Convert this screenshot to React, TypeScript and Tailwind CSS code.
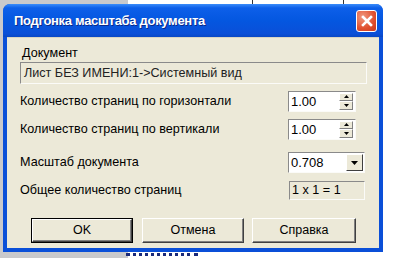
const font = { fontFamily: '"Liberation Sans", Arial, sans-serif' };

function Sunken({ className = "", children }: { className?: string; children?: React.ReactNode }) {
  return (
    <div
      className={`border border-t-[#8a8a8a] border-l-[#8a8a8a] border-r-[#fbfbf8] border-b-[#fbfbf8] ${className}`}
    >
      {children}
    </div>
  );
}

function Tri({ up }: { up?: boolean }) {
  return (
    <svg width="5" height="3" viewBox="0 0 5 3">
      <path d={up ? "M2.5 0 L5 3 L0 3 Z" : "M0 0 L5 0 L2.5 3 Z"} fill="#000" />
    </svg>
  );
}

function Spin({ value }: { value: string }) {
  return (
    <Sunken className="w-[68px] h-[21px] bg-white flex items-center pl-[2px] pr-[2px]">
      <span className="flex-1 text-[13px] leading-none">{value}</span>
      <div className="w-[14px] h-[17px] flex flex-col">
        <div className="flex-1 bg-[#ece9d8] border border-t-white border-l-white border-r-[#808080] border-b-[#808080] flex items-center justify-center">
          <Tri up />
        </div>
        <div className="flex-1 bg-[#ece9d8] border border-t-white border-l-white border-r-[#808080] border-b-[#808080] flex items-center justify-center">
          <Tri />
        </div>
      </div>
    </Sunken>
  );
}

function Btn({ label, def, w }: { label: string; def?: boolean; w: string }) {
  return (
    <div className={`${w} h-[25px] ${def ? "border border-black" : ""}`}>
      <div className="h-full w-full bg-[#ece9d8] border border-t-white border-l-white border-r-[#404040] border-b-[#404040] shadow-[inset_-1px_-1px_0_#808080] flex items-center justify-center text-[12.5px]">
        {label}
      </div>
    </div>
  );
}

export default function App() {
  return (
    <div className="w-[394px] h-[258px] bg-white relative overflow-hidden" style={font}>
      {/* backdrop */}
      <div className="absolute left-0 top-0 w-[128px] h-full bg-[#c9c9cc]" />
      <div className="absolute left-[252px] top-0 w-[1px] h-[4px] bg-[#333]" />
      <div className="absolute left-[343px] top-0 w-[1px] h-[4px] bg-[#333]" />
      <div className="absolute left-[126px] top-[253px] w-[72px] h-[4px] border-t-[3px] border-dotted border-[#1a2a7a]" />

      {/* dialog */}
      <div className="relative ml-[3px] mt-[4px] w-[380px] h-[248px] flex flex-col rounded-t-[7px] overflow-hidden bg-[#0a4fd8]">
        <div className="h-[33px] shrink-0 flex items-center pl-[11px] pr-[6px] bg-[linear-gradient(#3a8cfa_0%,#0d5fe9_12%,#0457e0_50%,#0a4fd8_90%,#0847c4_100%)]">
          <span className="flex-1 text-white font-bold text-[13px] tracking-[-0.3px] [text-shadow:1px_1px_0_#0a2a8a]">
            Подгонка масштаба документа
          </span>
          <div className="w-[21px] h-[22px] rounded-[3px] border border-white bg-[radial-gradient(circle_at_30%_30%,#f09a80,#e0502f_60%,#c8391c)] flex items-center justify-center">
            <svg width="12" height="12" viewBox="0 0 12 12">
              <path d="M2 2 L10 10 M10 2 L2 10" stroke="#fff" strokeWidth="2.6" strokeLinecap="square" />
            </svg>
          </div>
        </div>
        <div className="flex-1 mx-[4px] mb-[4px] bg-[#ece9d8] border-t border-[#d8d4c4] flex flex-col pl-[13px] pr-[10px] text-[12.6px] text-black">
          <div className="mt-[8px] ml-[2px] leading-[14px]">Документ</div>
          <Sunken className="mt-[2px] w-[347px] h-[22px] flex items-center pl-[3px] text-[12.6px] text-[#222]">
            Лист БЕЗ ИМЕНИ:1-&gt;Системный вид
          </Sunken>
          <div className="mt-[6px] flex items-center h-[22px]">
            <span className="w-[268px]">Количество страниц по горизонтали</span>
            <Spin value="1.00" />
          </div>
          <div className="mt-[6px] flex items-center h-[22px]">
            <span className="w-[268px]">Количество страниц по вертикали</span>
            <Spin value="1.00" />
          </div>
          <div className="mt-[12px] flex items-center h-[21px]">
            <span className="w-[268px]">Масштаб документа</span>
            <Sunken className="w-[77px] h-[21px] bg-white flex items-center pl-[2px] pr-[1px]">
              <span className="flex-1 text-[13px] leading-none">0.708</span>
              <div className="w-[17px] h-[17px] bg-[#ece9d8] border border-t-white border-l-white border-r-[#404040] border-b-[#404040] flex items-center justify-center">
                <svg width="7" height="4" viewBox="0 0 7 4">
                  <path d="M0 0 L7 0 L3.5 4 Z" fill="#000" />
                </svg>
              </div>
            </Sunken>
          </div>
          <div className="mt-[8px] flex items-center h-[19px]">
            <span className="w-[269px]">Общее количество страниц</span>
            <Sunken className="w-[76px] h-[19px] flex items-center pl-[2px] text-[12.6px]">1 x 1 = 1</Sunken>
          </div>
          <div className="mt-[18px] ml-[11px] flex gap-[9px]">
            <Btn label="OK" def w="w-[102px]" />
            <Btn label="Отмена" w="w-[102px]" />
            <div className="ml-[-1px]">
              <Btn label="Справка" w="w-[104px]" />
            </div>
          </div>
        </div>
      </div>
    </div>
  );
}
